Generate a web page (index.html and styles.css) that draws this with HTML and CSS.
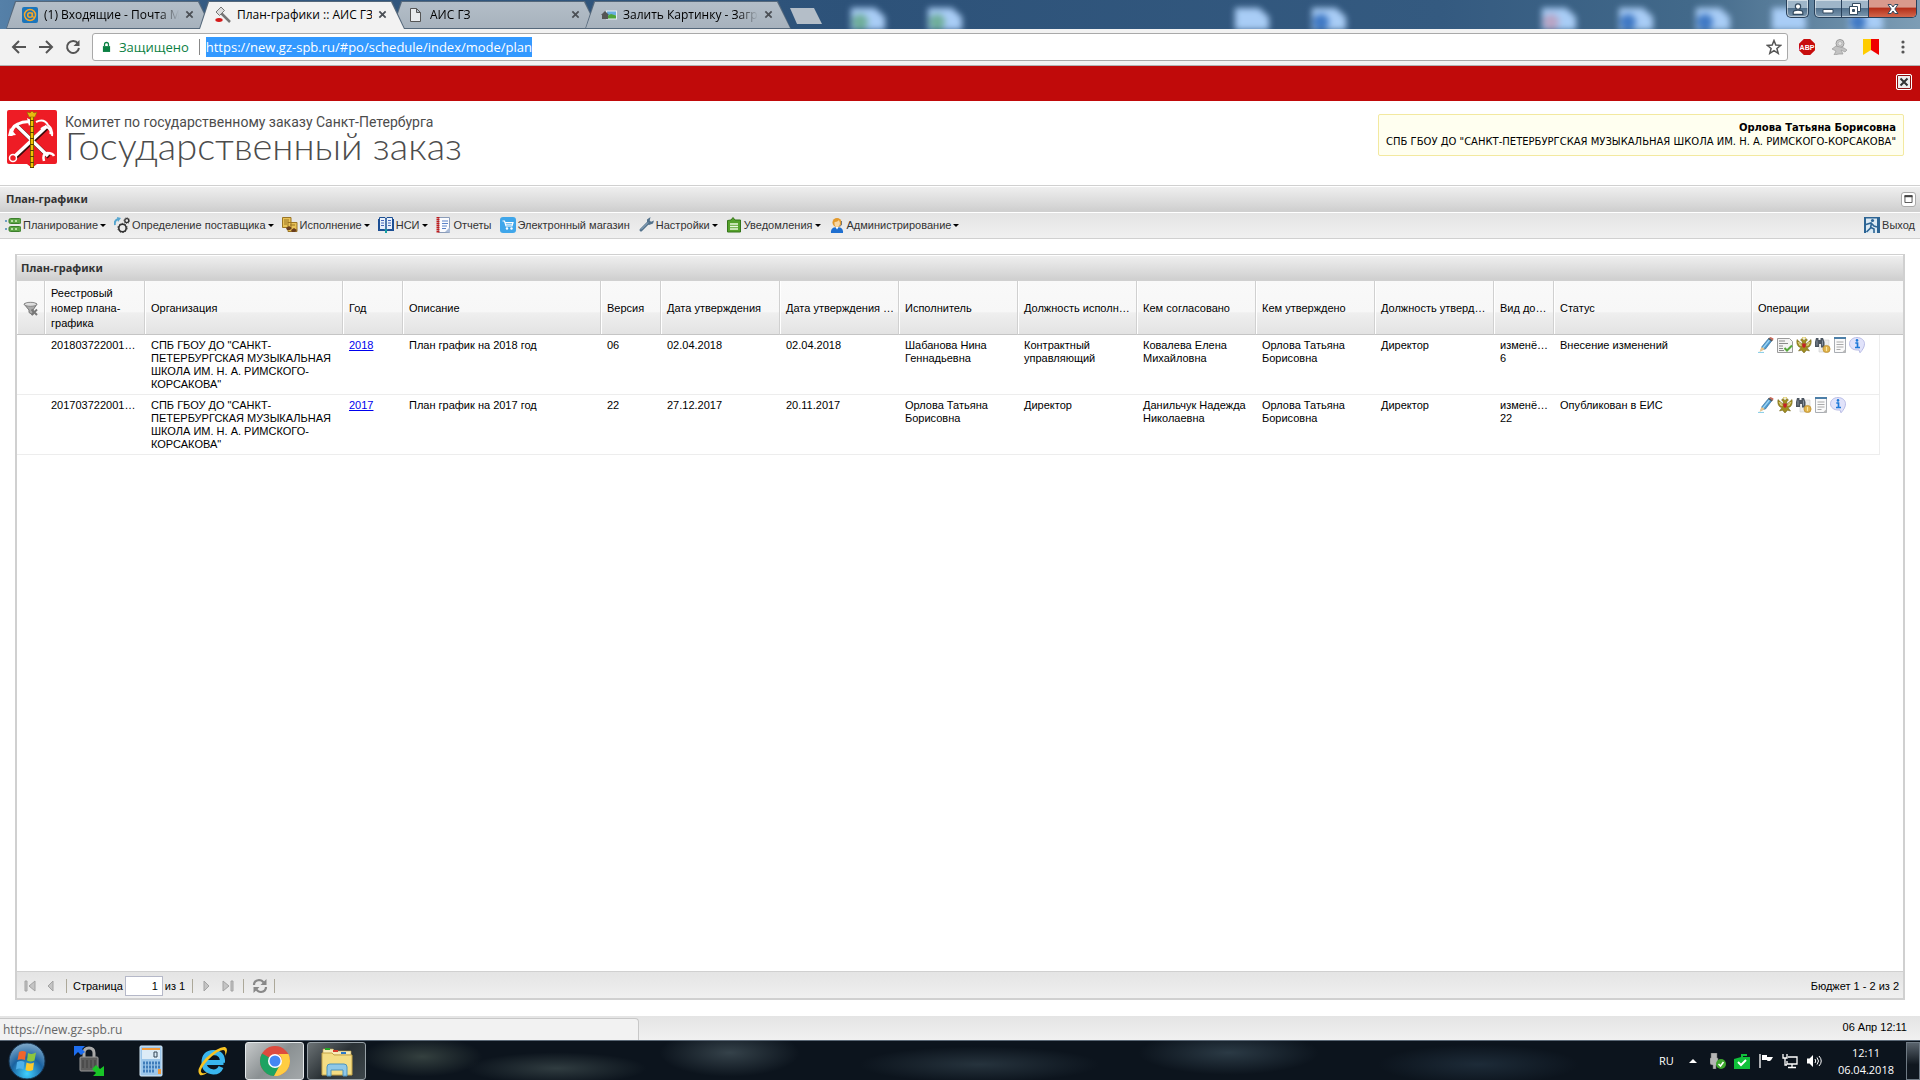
FILE: index.html
```html
<!DOCTYPE html>
<html lang="ru">
<head>
  <meta charset="UTF-8">
  <meta name="viewport" content="width=device-width, initial-scale=1.0">
  <title>План-графики :: АИС ГЗ</title>
  <link rel="stylesheet" href="styles.css">
</head>
<body>
  <svg class="sprite" aria-hidden="true">
    <symbol id="i-pencil" viewBox="0 0 16 16">
      <path d="M0 15.500h6" stroke="#8fd0e8" stroke-width="1.200"/>
      <path d="M3 13l1-3.500 6.500-8 3.500 2-6.500 8.500z" fill="#4f9bd0" stroke="#2e6590" stroke-width=".6"/>
      <path d="M5 11l6.500-8" stroke="#9ed4f2" stroke-width="1.200"/>
      <path d="M1.500 15l2-5 3.500 2z" fill="#e8c48c"/>
      <path d="M11 1l1.500-1 3 1.500-.5 2z" fill="#c96a5c"/>
      <path d="M10 2l1-1.200 3.800 2.400-1 1.200z" fill="#555"/>
    </symbol>
    <symbol id="i-check" viewBox="0 0 16 16">
      <path d="M.500 1.500h12l3 3v11H.500z" fill="#f4f4f4" stroke="#9b9b9b"/>
      <path d="M2 4h6M2 6.500h9M2 9h4M2 11.500h4M2 13.500h5" stroke="#8a8a8a" stroke-width="1.200"/>
      <path d="M7.500 11l2.500 2.500 5-5" fill="none" stroke="#57a83c" stroke-width="2"/>
    </symbol>
    <symbol id="i-eagle" viewBox="0 0 16 16">
      <path d="M8 3.500L6 1.500 4.500 3 6 4.500 6.500 7C5 7 3.500 4.500 1 2.500c-.6 3 0 6 2 7.500l2 .5-2.500 3.500 3-.8L8 16l2.500-2.800 3 .8-2.500-3.500 2-.5c2-1.500 2.600-4.500 2-7.500-2.500 2-4 4.500-5.500 4.500L10 4.500 11.500 3 10 1.500z" fill="#a08e20" stroke="#6b5c1a" stroke-width=".5"/>
      <path d="M2 5l2.500 4M3.500 5.500l2 3M14 5l-2.500 4M12.500 5.500l-2 3" stroke="#f3ecb0" stroke-width=".8"/>
      <path d="M6.300 0h1.200v1.500H6.300zM8.500 0h1.200v1.500H8.500z" fill="#d8bf3a"/>
      <path d="M6.300 6.500h3.400v3L8 11 6.300 9.500z" fill="#c5202a"/>
    </symbol>
    <symbol id="i-binoc" viewBox="0 0 16 16">
      <path d="M4 3h10v12H4z" fill="#ececec" stroke="#ccc" stroke-width=".6"/>
      <path d="M1 1h2.500v2h2V1H8l1.500 4v5.500H6V7H4v3H0V5z" fill="#4b545f"/>
      <path d="M2 3.500v5M7.500 3.500v5" stroke="#8792a0"/>
      <circle cx="11.500" cy="12" r="3.600" fill="#dfb24a" stroke="#b98a2a" stroke-width=".7"/>
      <path d="M11.500 10v4" stroke="#fbe6a2" stroke-width="1.200"/>
    </symbol>
    <symbol id="i-doc" viewBox="0 0 12 16">
      <path d="M.500 1h11v14.500H.500z" fill="#fafafa" stroke="#a9adb3"/>
      <path d="M0 1h12" stroke="#4c7fa8" stroke-width="2"/>
      <path d="M2.500 5h7M2.500 7.500h7M2.500 10h7M2.500 12.500h4" stroke="#aaa"/>
      <path d="M8 15.500l3.500-3.500v3.500z" fill="#bbb"/>
    </symbol>
    <symbol id="i-info" viewBox="0 0 16 16">
      <path d="M8 .500c4.300 0 7.500 2.800 7.500 6.200 0 3-1.500 5.700-4.500 9.100L10 13H8C4 13 .500 10.500.500 6.700.500 3.300 3.700.500 8 .500z" fill="#e1e3fa" stroke="#babde6"/>
      <circle cx="8" cy="3.400" r="1.300" fill="#1c78d8"/>
      <path d="M6.300 6h2.200v4M6 10.500h5" fill="none" stroke="#1c78d8" stroke-width="1.700"/>
    </symbol>
    <symbol id="i-plan" viewBox="0 0 16 16">
      <path d="M0 4h2M0 12h2" stroke="#4a88b8" stroke-width="1.500"/>
      <rect x="4" y="1.500" width="12" height="5" rx="1.500" fill="#5ca545" stroke="#3c7f2c"/>
      <rect x="4" y="9.500" width="12" height="5" rx="1.500" fill="#5ca545" stroke="#3c7f2c"/>
      <path d="M6 4h2M10 4h2M6 12h2M10 12h2" stroke="#d2f0c4" stroke-width="1.500"/>
    </symbol>
    <symbol id="i-gears" viewBox="0 0 16 16">
      <path d="M1 8c-.8-3 .5-5 3-6" fill="none" stroke="#55a5cf" stroke-width="2"/>
      <path d="M3 0l4 1-3 4z" fill="#55a5cf"/>
      <circle cx="8.500" cy="11" r="3.700" fill="none" stroke="#303030" stroke-width="1.600"/>
      <circle cx="8.500" cy="11" r="4.600" fill="none" stroke="#303030" stroke-width="1" stroke-dasharray="1.500 1.400"/>
      <circle cx="12.800" cy="3.600" r="2" fill="none" stroke="#303030" stroke-width="1.300"/>
      <circle cx="12.800" cy="3.600" r="2.900" fill="none" stroke="#303030" stroke-width=".8" stroke-dasharray="1 1.200"/>
    </symbol>
    <symbol id="i-exec" viewBox="0 0 16 16">
      <path d="M.500.500H9v10H.500zM6 5.500h9v9H6z" fill="#e8c257" stroke="#9b7524"/>
      <path d="M2 3h5M2 5h5M2 7h3M8 8h5" stroke="#9b7524"/>
      <path d="M4 11l3-2 3 2-2 2H5zM9 13l3-2 3 2-2 2h-3z" fill="#6b3f1f"/>
    </symbol>
    <symbol id="i-book" viewBox="0 0 16 16">
      <path d="M0 2h16v12H0z" fill="#1c4f94"/>
      <path d="M1.500.500H7l1 1 1-1h5.500v12H9.500L8 13.800 6.500 12.500h-5z" fill="#e9f1fb" stroke="#1c4f94"/>
      <path d="M8 1v12.500" stroke="#1c4f94" stroke-width="1.500"/>
      <path d="M3 3.500h3M3 6h3M3 8.500h3M10 3.500h3M10 6h3M10 8.500h3" stroke="#4a68b8" stroke-width="1.200"/>
      <path d="M8 12v4" stroke="#16a0a0" stroke-width="2"/>
    </symbol>
    <symbol id="i-report" viewBox="0 0 16 16">
      <path d="M2.500.500h11v15h-11z" fill="#fbfcff" stroke="#8b9cb8"/>
      <path d="M2 0v16" stroke="#c01c1c" stroke-width="3" stroke-dasharray="1.500 .500"/>
      <path d="M6 4h6M6 6.500h6M6 9h5M6 11.500h4" stroke="#5b83c8"/>
      <path d="M9 15l5-5v5.500z" fill="#aabbd8"/>
    </symbol>
    <symbol id="i-shop" viewBox="0 0 16 16">
      <rect width="16" height="16" rx="3" fill="#3fa6ea"/>
      <path d="M2.500 4h2l1.500 5h6l1-3.500H5.500" fill="none" stroke="#fff" stroke-width="1.200"/>
      <path d="M6 7.200h6.500" stroke="#fff"/>
      <circle cx="7" cy="11.500" r="1.200" fill="#fff"/><circle cx="11.500" cy="11.500" r="1.200" fill="#fff"/>
    </symbol>
    <symbol id="i-wrench" viewBox="0 0 16 16">
      <path d="M3 13l7-7" stroke="#53728c" stroke-width="3" stroke-linecap="round"/>
      <path d="M12.500 0L9 2.500v4l2 1.500 4-1.500 1-3-3 1.200-1.300-1.200z" fill="#53728c"/>
      <path d="M3 12.500L10 5.500" stroke="#9fb8cc"/>
    </symbol>
    <symbol id="i-note" viewBox="0 0 16 16">
      <path d="M1.500 3.500L5 3l2-2.500L9 3h5.500v12h-13z" fill="#55a12a" stroke="#35751a"/>
      <path d="M4 7h8M4 9.500h8M4 12h8" stroke="#eaf8dc" stroke-width="1.300"/>
    </symbol>
    <symbol id="i-admin" viewBox="0 0 16 16">
      <path d="M2 16c-.500-4 2-6 6-6s6.500 2 6 6z" fill="#1f6fd0"/>
      <path d="M6 9.500l2 3 2-3z" fill="#fff"/>
      <circle cx="8" cy="5.500" r="4.500" fill="#e39a2d"/>
      <path d="M5.500 5c3 0 4-1.500 4.500-2l1 3c0 2-1.300 4-3 4S5 8 5.500 5z" fill="#f8d7a4"/>
      <path d="M12.500 4v4l-2 1.500" fill="none" stroke="#777"/>
    </symbol>
    <symbol id="i-exit" viewBox="0 0 16 16">
      <path d="M0 0h16v16H0z" fill="#2c6494"/>
      <path d="M2 1.500h11V16H2z" fill="#dceaf4"/>
      <circle cx="8.500" cy="3.500" r="1.600" fill="#2c6494"/>
      <path d="M2 7.500L7 6l3 3 3 1M7.500 6l-1 5L2.500 15M7 10.500l3 1.500v4" fill="none" stroke="#2c6494" stroke-width="1.600"/>
    </symbol>
    <symbol id="i-x" viewBox="0 0 10 10"><path d="M1.500 1.500l7 7M8.500 1.500l-7 7" stroke="currentColor" stroke-width="2"/></symbol>
    <symbol id="i-desktop" viewBox="0 0 44 22">
      <path d="M6 0h24l10 9v13H6z" fill="#a9cdf6"/>
      <circle cx="15" cy="14" r="8" fill="currentColor"/>
    </symbol>
  </svg>

  <!-- Окно браузера -->
  <div class="tabstrip">
    <div class="desktop-blur" aria-hidden="true">
      <svg class="d1"><use href="#i-desktop"/></svg>
      <svg class="d2"><use href="#i-desktop"/></svg>
      <svg class="d3"><use href="#i-desktop"/></svg>
      <svg class="d4"><use href="#i-desktop"/></svg>
      <svg class="d5"><use href="#i-desktop"/></svg>
      <svg class="d6"><use href="#i-desktop"/></svg>
      <svg class="d7"><use href="#i-desktop"/></svg>
      <svg class="d8"><use href="#i-desktop"/></svg>
      <svg class="d9"><use href="#i-desktop"/></svg>
    </div>
    <div class="tab">
      <svg class="icon" viewBox="0 0 16 16"><rect width="16" height="16" rx="2" fill="#1b75bb"/><circle cx="8" cy="8" r="5.500" fill="none" stroke="#f4a62a" stroke-width="1.500"/><circle cx="8" cy="8" r="2.300" fill="none" stroke="#f4a62a" stroke-width="1.500"/><path d="M10.500 5.500V9q0 1.500 2 1" fill="none" stroke="#f4a62a" stroke-width="1.300"/></svg>
      <span class="tab-title">(1) Входящие - Почта M</span>
      <button class="tab-close" aria-label="Закрыть вкладку"><svg><use href="#i-x"/></svg></button>
    </div>
    <div class="tab active">
      <svg class="icon" viewBox="0 0 16 16"><path d="M5.500 5.500L15 15" stroke="#777" stroke-width="2.500"/><path d="M1 5l5-5 3.500 3.500-5 5z" fill="#ddd" stroke="#777"/><path d="M.500 12q3.500-2 7 0v2q-3.500 2-7 0z" fill="#d41a1a"/></svg>
      <span class="tab-title">План-графики :: АИС ГЗ</span>
      <button class="tab-close" aria-label="Закрыть вкладку"><svg><use href="#i-x"/></svg></button>
    </div>
    <div class="tab">
      <svg class="icon" viewBox="0 0 16 16"><path d="M2.500 1.500h6l4 4v9h-10zM8.500 1.500v4h4" fill="#e8ebee" stroke="#555"/></svg>
      <span class="tab-title">АИС ГЗ</span>
      <button class="tab-close" aria-label="Закрыть вкладку"><svg><use href="#i-x"/></svg></button>
    </div>
    <div class="tab">
      <svg class="icon" viewBox="0 0 16 16"><path d="M5 3.500h11v9H5z" fill="#e6eef5"/><path d="M6 4.500h9v4H6z" fill="#69aee0"/><path d="M6 9l4-2 5 1.500v3H6z" fill="#4ea53a"/><path d="M0 8l4-4 4 4H7v4H1V8z" fill="#555"/></svg>
      <span class="tab-title">Залить Картинку - Загру</span>
      <button class="tab-close" aria-label="Закрыть вкладку"><svg><use href="#i-x"/></svg></button>
    </div>
    <button class="new-tab" aria-label="Новая вкладка"></button>
    <div class="window-buttons">
      <button class="win-user" aria-label="Профиль"><svg viewBox="0 0 10 10"><circle cx="5" cy="3" r="2.200"/><path d="M1 9.500V8q0-2 4-2t4 2v1.500z"/></svg></button>
      <div class="win-group">
        <button aria-label="Свернуть"><svg viewBox="0 0 12 12"><path d="M1 6.500h10v3.500H1z"/></svg></button>
        <button aria-label="Восстановить"><svg viewBox="0 0 12 12"><path d="M3.500.500h8v8h-8z"/><path d="M.500 3.500h8v8h-8z"/><path d="M3.500 6.500h2v2h-2z" fill="#456"/></svg></button>
        <button class="win-close" aria-label="Закрыть"><svg viewBox="0 0 12 12"><path d="M1 1.500h3.200L6 4l1.800-2.500H11L7.800 6 11 10.500H7.800L6 8l-1.800 2.500H1L4.200 6z"/></svg></button>
      </div>
    </div>
  </div>

  <div class="addressbar">
    <button class="nav-btn" aria-label="Назад"><svg viewBox="0 0 16 16"><path d="M15 8H2M8 2L2 8l6 6"/></svg></button>
    <button class="nav-btn" aria-label="Вперёд"><svg viewBox="0 0 16 16"><path d="M1 8h13M8 2l6 6-6 6"/></svg></button>
    <button class="nav-btn" aria-label="Обновить"><svg viewBox="0 0 16 16"><path d="M13 4.500A6 6 0 1 0 14 9"/><path d="M14.500 1v6h-6z" fill="#555" stroke="none"/></svg></button>
    <div class="omnibox">
      <svg class="lock" viewBox="0 0 10 12"><path d="M1 5h8v6.500H1z" fill="#0b8043"/><path d="M2.800 5V3.200a2.200 2.200 0 0 1 4.400 0V5" fill="none" stroke="#0b8043" stroke-width="1.400"/></svg>
      <span class="secure">Защищено</span>
      <span class="url">https://new.gz-spb.ru/#po/schedule/index/mode/plan</span>
      <button class="star" aria-label="В закладки"><svg viewBox="0 0 16 16"><path d="M8 1.500l1.800 4.600 4.900.300-3.800 3.100 1.300 4.800L8 11.600l-4.200 2.700 1.300-4.800L1.300 6.400l4.900-.300z"/></svg></button>
    </div>
    <div class="extensions">
      <button class="abp" aria-label="Adblock Plus">ABP</button>
      <button aria-label="Расширение"><svg viewBox="0 0 16 16"><circle cx="9" cy="4.500" r="4" fill="#ccc" stroke="#999"/><circle cx="9" cy="4.500" r="2" fill="#e4e4e4" stroke="#aaa" stroke-width=".7"/><path d="M1 10l4-3 8 2 3 2-2 2-4-2 2 4H8l-5 1 2-4z" fill="#c2c2c2" stroke="#999" stroke-width=".7"/></svg></button>
      <button aria-label="Закладки"><svg viewBox="0 0 16 16"><path d="M0 0h8v11l-8 5z" fill="#fc0"/><path d="M8 0h8v16l-8-5z" fill="#f00000"/></svg></button>
      <button aria-label="Меню"><svg viewBox="0 0 16 16" fill="#555"><circle cx="8" cy="3" r="1.600"/><circle cx="8" cy="8" r="1.600"/><circle cx="8" cy="13" r="1.600"/></svg></button>
    </div>
  </div>

  <!-- Страница -->
  <div class="alert">
    <button class="alert-close" aria-label="Закрыть"><svg><use href="#i-x"/></svg></button>
  </div>

  <header class="header">
    <a class="logo" href="#">
      <svg class="crest" viewBox="0 0 50 58">
        <path d="M2 0h46q2 0 2 2v50q0 2-2 2H30l-5 4-5-4H2q-2 0-2-2V2q0-2 2-2z" fill="#ee1c25"/>
        <g fill="none" stroke="#3b0a0a" stroke-width="4" transform="translate(1 1)"><path d="M8 46L40 16M41 46L9 15"/></g>
        <g fill="none" stroke="#fff">
          <path d="M8 46L40 16M41 46L9 15" stroke-width="3.500"/>
          <path d="M4 26Q4 17 11 14q6-3 12-2" stroke-width="3"/>
          <path d="M29 12q8-4 12 3 5 4 4 11M34 19q5-4 7-1 4 3 2 6" stroke-width="2"/>
          <circle cx="6" cy="48" r="3.500" stroke-width="1.500"/>
          <path d="M37 51q-2-7 3-8 6 0 7 3" stroke-width="2.500"/>
        </g>
        <path d="M1 26l2-8 6 7zM20 8l6 3-4 5z" fill="#fff"/>
        <path d="M25 5v53" stroke="#5c4300" stroke-width="4"/>
        <path d="M25 5v52" stroke="#f0c400" stroke-width="2.500" stroke-dasharray="5 1"/>
        <path d="M20 2l3 1 2-2 2 2 3-1-2 5h-6z" fill="#e8ba10" stroke="#8d6a00" stroke-width=".6"/>
      </svg>
      <span class="logo-text">
        <span class="logo-small">Комитет по государственному заказу Санкт-Петербурга</span>
        <span class="logo-big">Государственный заказ</span>
      </span>
    </a>
    <div class="user-box">
      <strong>Орлова Татьяна Борисовна</strong>
      <span>СПБ ГБОУ ДО "САНКТ-ПЕТЕРБУРГСКАЯ МУЗЫКАЛЬНАЯ ШКОЛА ИМ. Н. А. РИМСКОГО-КОРСАКОВА"</span>
    </div>
  </header>

  <div class="panel-title page-title">
    <h1>План-графики</h1>
    <button class="tool" aria-label="Развернуть"><svg viewBox="0 0 9 9"><path d="M.500.500h8v8h-8z" fill="none" stroke="#444"/><path d="M0 1.500h9" stroke="#444" stroke-width="2"/></svg></button>
  </div>

  <nav class="menu">
    <button class="has-menu"><svg class="icon"><use href="#i-plan"/></svg>Планирование</button>
    <button class="has-menu"><svg class="icon"><use href="#i-gears"/></svg>Определение поставщика</button>
    <button class="has-menu"><svg class="icon"><use href="#i-exec"/></svg>Исполнение</button>
    <button class="has-menu"><svg class="icon"><use href="#i-book"/></svg>НСИ</button>
    <button><svg class="icon"><use href="#i-report"/></svg>Отчеты</button>
    <button><svg class="icon"><use href="#i-shop"/></svg>Электронный магазин</button>
    <button class="has-menu"><svg class="icon"><use href="#i-wrench"/></svg>Настройки</button>
    <button class="has-menu"><svg class="icon"><use href="#i-note"/></svg>Уведомления</button>
    <button class="has-menu"><svg class="icon"><use href="#i-admin"/></svg>Администрирование</button>
    <button class="exit"><svg class="icon"><use href="#i-exit"/></svg>Выход</button>
  </nav>

  <main class="content">
    <section class="grid">
      <div class="panel-title"><h2>План-графики</h2></div>
      <div class="grid-body">
        <table>
          <colgroup>
            <col class="w-filter"><col class="w-num"><col><col class="w-short"><col><col class="w-short">
            <col class="w-mid"><col class="w-mid"><col class="w-mid"><col class="w-mid"><col class="w-mid"><col class="w-mid"><col class="w-mid">
            <col class="w-short"><col><col class="w-ops"><col class="w-scroll">
          </colgroup>
          <thead>
            <tr>
              <th class="filter"><svg class="icon" viewBox="0 0 16 16"><path d="M1 3q6.500-2.500 13 0L10 9v5l-4-2.500V9z" fill="#aaa" stroke="#777"/><ellipse cx="7.500" cy="3.300" rx="6.300" ry="2" fill="#ddd" stroke="#777" stroke-width=".8"/><path d="M8.500 8.500l5.500 5.500M14 8.500L8.500 14" stroke="#777" stroke-width="2"/></svg></th>
              <th class="wrap">Реестровый номер плана-графика</th>
              <th>Организация</th>
              <th>Год</th>
              <th>Описание</th>
              <th>Версия</th>
              <th>Дата утверждения</th>
              <th>Дата утверждения …</th>
              <th>Исполнитель</th>
              <th>Должность исполн…</th>
              <th>Кем согласовано</th>
              <th>Кем утверждено</th>
              <th>Должность утверд…</th>
              <th>Вид до…</th>
              <th>Статус</th>
              <th class="last" colspan="2">Операции</th>
            </tr>
          </thead>
          <tbody>
            <tr>
              <td></td>
              <td>201803722001…</td>
              <td>СПБ ГБОУ ДО "САНКТ-ПЕТЕРБУРГСКАЯ МУЗЫКАЛЬНАЯ ШКОЛА ИМ. Н. А. РИМСКОГО-КОРСАКОВА"</td>
              <td><a href="#">2018</a></td>
              <td>План график на 2018 год</td>
              <td>06</td>
              <td>02.04.2018</td>
              <td>02.04.2018</td>
              <td>Шабанова Нина Геннадьевна</td>
              <td>Контрактный управляющий</td>
              <td>Ковалева Елена Михайловна</td>
              <td>Орлова Татьяна Борисовна</td>
              <td>Директор</td>
              <td>изменё… 6</td>
              <td>Внесение изменений</td>
              <td class="ops">
                <div class="ops-list">
                  <button aria-label="Редактировать"><svg class="icon"><use href="#i-pencil"/></svg></button>
                  <button aria-label="Проверить"><svg class="icon"><use href="#i-check"/></svg></button>
                  <button aria-label="ЕИС"><svg class="icon"><use href="#i-eagle"/></svg></button>
                  <button aria-label="Просмотр"><svg class="icon"><use href="#i-binoc"/></svg></button>
                  <button aria-label="Документ"><svg class="icon narrow"><use href="#i-doc"/></svg></button>
                  <button aria-label="Информация"><svg class="icon"><use href="#i-info"/></svg></button>
                </div>
              </td>
              <td class="scroll"></td>
            </tr>
            <tr>
              <td></td>
              <td>201703722001…</td>
              <td>СПБ ГБОУ ДО "САНКТ-ПЕТЕРБУРГСКАЯ МУЗЫКАЛЬНАЯ ШКОЛА ИМ. Н. А. РИМСКОГО-КОРСАКОВА"</td>
              <td><a href="#">2017</a></td>
              <td>План график на 2017 год</td>
              <td>22</td>
              <td>27.12.2017</td>
              <td>20.11.2017</td>
              <td>Орлова Татьяна Борисовна</td>
              <td>Директор</td>
              <td>Данильчук Надежда Николаевна</td>
              <td>Орлова Татьяна Борисовна</td>
              <td>Директор</td>
              <td>изменё… 22</td>
              <td>Опубликован в ЕИС</td>
              <td class="ops">
                <div class="ops-list">
                  <button aria-label="Редактировать"><svg class="icon"><use href="#i-pencil"/></svg></button>
                  <button aria-label="ЕИС"><svg class="icon"><use href="#i-eagle"/></svg></button>
                  <button aria-label="Просмотр"><svg class="icon"><use href="#i-binoc"/></svg></button>
                  <button aria-label="Документ"><svg class="icon narrow"><use href="#i-doc"/></svg></button>
                  <button aria-label="Информация"><svg class="icon"><use href="#i-info"/></svg></button>
                </div>
              </td>
              <td class="scroll"></td>
            </tr>
          </tbody>
        </table>
      </div>
      <div class="pager">
        <button aria-label="Первая страница"><svg viewBox="0 0 12 12"><path d="M1 1h2v10H1zM11 1v10L5 6z"/></svg></button>
        <button aria-label="Предыдущая страница"><svg viewBox="0 0 12 12"><path d="M8 1v10L3 6z"/></svg></button>
        <span class="sep"></span>
        <label for="page">Страница</label>
        <input id="page" type="text" value="1">
        <span>из 1</span>
        <span class="sep wide"></span>
        <button aria-label="Следующая страница"><svg viewBox="0 0 12 12"><path d="M3 1v10l5-5z"/></svg></button>
        <button aria-label="Последняя страница"><svg viewBox="0 0 12 12"><path d="M9 1h2v10H9zM1 1v10l6-5z"/></svg></button>
        <span class="sep wide"></span>
        <button class="refresh" aria-label="Обновить"><svg viewBox="0 0 16 16"><path d="M2 7q0-4.500 5-5 3 0 4.500 2.500M14 9q0 4.500-5 5-3 0-4.500-2.500" fill="none" stroke="#888" stroke-width="2.200"/><path d="M14.500 1v6H8.500zM1.500 15V9h6z" fill="#888"/></svg></button>
        <span class="sep"></span>
        <span class="total">Бюджет 1 - 2 из 2</span>
      </div>
    </section>
  </main>

  <footer class="footer">
    <span>06 Апр 12:11</span>
    <div class="link-status">https://new.gz-spb.ru</div>
  </footer>

  <!-- Панель задач -->
  <div class="taskbar">
    <button class="start" aria-label="Пуск">
      <svg viewBox="0 0 38 38">
        <defs><radialGradient id="orb" cx=".5" cy=".85" r=".9"><stop offset="0" stop-color="#3fd0ff"/><stop offset=".5" stop-color="#1b62a0"/><stop offset="1" stop-color="#8eb4cf"/></radialGradient></defs>
        <circle cx="19" cy="19" r="18" fill="url(#orb)" stroke="#16334e"/>
        <path d="M11 10q4-2 7 0l-1 8q-4-1.500-7.500 0z" fill="#f0652b"/>
        <path d="M20 11q4 2 8-.500l-1.500 8q-4 2-7.500 0z" fill="#8cc63e"/>
        <path d="M9 20q4-2 7.500 0l-1 7.500q-4-2-7.500 0z" fill="#4fb0ea"/>
        <path d="M18.500 20.500q4 2 7.500 0l-1 7.500q-4 2-7.500 0z" fill="#fcc92c"/>
      </svg>
    </button>
    <button class="task" aria-label="VPN">
      <svg viewBox="0 0 32 32"><path d="M11 14V8q0-5 5-5t5 5v6" fill="none" stroke="#aaa" stroke-width="3"/><rect x="7" y="12" width="18" height="14" rx="1" fill="#5c5c5c" stroke="#999"/><path d="M10 15v8M14 15v8M18 15v8M22 15v8" stroke="#3d3d3d"/><path d="M1 1h11l-3 3 3 3-4 3-3-3-4 4z" fill="#1e6ef0"/><path d="M31 31H20l3-3-4-4 4-4 4 4 4-3z" fill="#19c427"/></svg>
    </button>
    <button class="task" aria-label="Калькулятор">
      <svg viewBox="0 0 32 32"><rect x="5" y="1" width="22" height="30" rx="1" fill="#9cc6ea" stroke="#d9ecfa"/><path d="M7 3h18v2H7z" fill="#f39a3a"/><path d="M7 5h18v9H7z" fill="#dcebf7"/><path d="M19 7h3v5h-3z" fill="none" stroke="#345"/><path d="M8 18h17M8 22h17M8 26h12" stroke="#3f7cba" stroke-width="3" stroke-dasharray="2 1"/><path d="M23 24h3v5h-3z" fill="#f39a3a"/></svg>
    </button>
    <button class="task" aria-label="Internet Explorer">
      <svg viewBox="0 0 32 32"><path d="M6 17.500h20.500M24 22q-2 5-7.500 5Q7 26 7 17.500 7 8 16.500 7.500 26 8 25.500 17.500" fill="none" stroke="#39b6ee" stroke-width="5"/><path d="M3 30Q-2 25 9 13 22 1 28 2q4 2 0 9 1-6-2-6-5 0-15 10Q1 26 5 28q2 1 6-1-5 4-8 3z" fill="#f7c322"/></svg>
    </button>
    <button class="task running current" aria-label="Google Chrome">
      <svg viewBox="0 0 32 32"><circle cx="16" cy="16" r="15" fill="#dd4b3e"/><path d="M3 8.500A15 15 0 0 0 15 31l7-12z" fill="#1da362"/><path d="M31 16A15 15 0 0 1 15 31l8-15q0-5-4-7h10.500q1.500 3 1.500 7z" fill="#ffcd42"/><circle cx="16" cy="16" r="7" fill="#fff"/><circle cx="16" cy="16" r="5.500" fill="#4587f3"/></svg>
    </button>
    <button class="task running" aria-label="Проводник">
      <svg viewBox="0 0 32 32"><path d="M2 4h10l2 2h16v4H2z" fill="#f7ecb8" stroke="#b99c4c" stroke-width=".6"/><path d="M4 3h5v2H4z" fill="#28a428"/><path d="M12 5h5v2h-5z" fill="#d53c2c"/><path d="M20 7h5v2h-5z" fill="#2a78c8"/><path d="M1 8h10l2 2h18v20H1z" fill="#f4dd84" stroke="#c6a548"/><path d="M6 31V22q0-3 3-3h14q3 0 3 3v9h-4v-6H10v6z" fill="#8fc8e8" stroke="#4d94bd"/></svg>
    </button>
    <div class="tray">
      <span class="lang">RU</span>
      <svg class="up" viewBox="0 0 8 4"><path d="M4 0l4 4H0z" fill="#fff"/></svg>
      <svg viewBox="0 0 16 16"><path d="M1 0h6v5h1v5q0 2-2 2v4H3v-4q-3 0-3-2V5h1z" fill="#b5b5b5" stroke="#666" stroke-width=".5"/><circle cx="11" cy="11" r="5" fill="#3da72c"/><path d="M8.500 11l2 2 3-4" fill="none" stroke="#fff" stroke-width="1.500"/></svg>
      <svg viewBox="0 0 16 16"><path d="M0 6l7-2V1h6v2H9v1h7v12H0z" fill="#10c03a"/><path d="M4 9l3 3 5-5" fill="none" stroke="#fff" stroke-width="2"/></svg>
      <svg viewBox="0 0 16 16"><path d="M2 1v14" stroke="#fff" stroke-width="1.300"/><path d="M4 2h5v2h6l-1.500 2.500L12 8H9.500L9 7H4z" fill="#fff"/></svg>
      <svg viewBox="0 0 16 16" fill="none" stroke="#fff" stroke-width="1.300"><path d="M6 4h9v7H5V8M10 11v3M6 14.500h8M1 1v4h4V1M3 5v7h2"/></svg>
      <svg viewBox="0 0 16 16"><path d="M1 5.500h2.500L7 2v12l-3.500-3.500H1z" fill="#fff"/><path d="M9 6q1.500 2 0 4M11 4.500q3 3.500 0 7M13 3q4.500 5 0 10" fill="none" stroke="#fff"/></svg>
      <div class="clock"><span>12:11</span><span>06.04.2018</span></div>
      <button class="show-desktop" aria-label="Свернуть все окна"></button>
    </div>
  </div>
</body>
</html>
```
FILE: styles.css
```css
* {
  box-sizing: border-box;
}
body {
  margin: 0;
  height: 100vh;
  display: flex;
  flex-direction: column;
  overflow: hidden;
  background: #fff;
  color: #000;
  font-family: "Liberation Sans", Arial, sans-serif;
  font-size: 11px;
}
button {
  border: none;
  background: none;
  padding: 0;
  margin: 0;
  color: inherit;
  font: inherit;
  display: flex;
  align-items: center;
  justify-content: center;
  cursor: pointer;
}
h1, h2 {
  margin: 0;
}
.sprite {
  position: absolute;
  width: 0;
  height: 0;
}
.icon {
  width: 16px;
  height: 16px;
  flex: none;
  display: block;
}
.icon.narrow {
  width: 12px;
}

/* Вкладки */
.tabstrip {
  position: relative;
  display: flex;
  flex: none;
  height: 29px;
  padding-left: 6px;
  overflow: hidden;
  background: linear-gradient(90deg, #5580a8 0, #335880 220px, #2d5279 45%, #345a80 75%, #42698a 88%, #7d9db5 100%);
  font-family: "Open Sans", "Noto Sans", sans-serif;
  font-size: 12px;
}
.desktop-blur {
  position: absolute;
  inset: 0;
  filter: blur(3px);
}
.desktop-blur svg {
  position: absolute;
  top: 8px;
  width: 44px;
  height: 22px;
  color: #3f78c4;
}
.desktop-blur .d1 { left: 44%; color: #6fae9a; }
.desktop-blur .d2 { left: 48%; color: #6fae9a; }
.desktop-blur .d3 { left: 64%; color: #a9cdf6; }
.desktop-blur .d4 { left: 68%; }
.desktop-blur .d5 { left: 80%; color: #b8a5c5; }
.desktop-blur .d6 { left: 84%; }
.desktop-blur .d7 { left: 88%; }
.desktop-blur .d8 { left: 92%; color: #a9cdf6; }
.desktop-blur .d9 { left: 96%; }
.tab {
  position: relative;
  z-index: 1;
  display: flex;
  align-items: center;
  gap: 6px;
  width: 206px;
  height: 28px;
  margin: 1px -13px 0 0;
  padding: 0 18px 1px 16px;
  background: #55687b;
  clip-path: polygon(9px 0, 193px 0, 100% 100%, 0 100%);
}
.tab::before {
  content: "";
  position: absolute;
  inset: 1px 0 1px;
  z-index: -1;
  background: linear-gradient(#b4bec8, #a7b2bd);
  clip-path: polygon(10px 0, 192px 0, 205px 100%, 1px 100%);
}
.tab.active {
  z-index: 2;
}
.tab.active::before {
  inset: 1px 0 0;
  background: #f2f2f2;
}
.tab-title {
  flex: 1;
  overflow: hidden;
  white-space: nowrap;
  mask-image: linear-gradient(90deg, #000 85%, transparent);
}
.tab.active .tab-title {
  mask-image: none;
}
.tab-close {
  width: 9px;
  height: 16px;
  color: #4c5056;
}
.tab-close svg {
  width: 9px;
  height: 9px;
}
.new-tab {
  position: relative;
  width: 32px;
  height: 16px;
  margin: 8px 0 0 12px;
  background: #b4bec8;
  clip-path: polygon(0 0, 24px 0, 100% 100%, 7px 100%);
}
.window-buttons {
  position: relative;
  display: flex;
  gap: 5px;
  margin-left: auto;
  padding-right: 3px;
}
.window-buttons svg {
  width: 12px;
  height: 12px;
  fill: #fff;
  stroke: #344b60;
}
.win-user, .win-group {
  height: 18px;
  border: 1px solid #28405a;
  border-top: none;
  border-radius: 0 0 5px 5px;
  box-shadow: inset 0 0 0 1px rgba(255, 255, 255, 0.5);
  background: linear-gradient(#9fb6c9 45%, #51708c 50%, #7c98b0);
}
.win-user {
  width: 23px;
}
.win-group {
  display: flex;
  overflow: hidden;
}
.win-group button {
  width: 27px;
  border-right: 1px solid #28405a;
}
.win-group .win-close {
  width: 47px;
  border-right: none;
  background: linear-gradient(#d99a8c 40%, #b5301a 50%, #d2674c);
}

/* Адресная строка */
.addressbar {
  display: flex;
  flex: none;
  align-items: center;
  height: 37px;
  padding: 0 9px 0 11px;
  gap: 11px;
  background: #f2f2f2;
  border-bottom: 1px solid #b3b3b3;
  font-family: "Open Sans", "Noto Sans", sans-serif;
  font-size: 13px;
}
.nav-btn svg {
  width: 16px;
  height: 16px;
  fill: none;
  stroke: #555;
  stroke-width: 2;
}
.omnibox {
  display: flex;
  flex: 1;
  align-items: center;
  height: 28px;
  padding: 0 5px 0 9px;
  background: #fff;
  border: 1px solid #a9a9a9;
  border-radius: 3px;
}
.lock {
  width: 9px;
  height: 12px;
}
.secure {
  margin-left: 8px;
  padding-right: 10px;
  border-right: 1px solid #888;
  line-height: 16px;
  color: #0b8043;
}
.url {
  margin-left: 6px;
  line-height: 20px;
  color: #fff;
  background: #3399ff;
}
.star {
  margin-left: auto;
}
.star svg {
  width: 16px;
  height: 16px;
  fill: none;
  stroke: #555;
  stroke-width: 1.5;
}
.extensions {
  display: flex;
  gap: 16px;
}
.extensions svg, .abp {
  width: 16px;
  height: 16px;
}
.abp {
  background: #c70d0d;
  color: #fff;
  font-family: "Liberation Sans", Arial, sans-serif;
  font-size: 7px;
  font-weight: bold;
  clip-path: polygon(30% 0, 70% 0, 100% 30%, 100% 70%, 70% 100%, 30% 100%, 0 70%, 0 30%);
}

/* Красная полоса */
.alert {
  display: flex;
  flex: none;
  align-items: center;
  justify-content: flex-end;
  height: 35px;
  padding: 0 8px 4px 0;
  background: #c00a0a;
}
.alert-close {
  width: 16px;
  height: 16px;
  background: #eee;
  border: 1px solid #fff;
  border-radius: 2px;
  box-shadow: inset 0 0 0 1px #8c1010;
  color: #333;
}
.alert-close svg {
  width: 10px;
  height: 10px;
}

/* Шапка */
.header {
  display: flex;
  flex: none;
  align-items: flex-start;
  justify-content: space-between;
  height: 84px;
  padding: 8px 16px 0 7px;
}
.logo {
  display: flex;
  gap: 8px;
  color: #4c4c4c;
  text-decoration: none;
}
.crest {
  width: 50px;
  height: 60px;
}
.logo-text {
  display: flex;
  flex-direction: column;
  padding-top: 4px;
}
.logo-small {
  font-family: Roboto, sans-serif;
  font-size: 14px;
  line-height: 18px;
}
.logo-big {
  font-family: Lato, sans-serif;
  font-weight: 300;
  font-size: 38px;
  line-height: 28px;
}
.user-box {
  display: flex;
  flex-direction: column;
  align-items: flex-end;
  margin-top: 5px;
  padding: 6px 7px;
  height: 42px;
  background: #fffff0;
  border: 1px solid #f3e9a0;
  border-radius: 2px;
  font-family: "DejaVu Sans", Verdana, sans-serif;
  font-size: 10px;
  line-height: 14px;
}

/* Панели */
.panel-title {
  display: flex;
  flex: none;
  align-items: center;
  justify-content: space-between;
  height: 27px;
  padding: 2px 4px 0;
  background: linear-gradient(#f0f0f0, #d7d7d7 80%, #d0d0d0);
  border-top: 1px solid #d0d0d0;
  border-bottom: 2px solid #d0d0d0;
  box-shadow: inset 0 1px #fff;
}
.panel-title h1, .panel-title h2 {
  color: #333;
  font-family: "Noto Sans", Tahoma, sans-serif;
  font-size: 11px;
  line-height: 16px;
}
.page-title {
  padding: 2px 4px 0 6px;
}
.tool {
  width: 15px;
  height: 15px;
  background: #fff;
  border: 1px solid #aaa;
  border-radius: 3px;
}
.tool svg {
  width: 9px;
  height: 8px;
}
.menu {
  display: flex;
  flex: none;
  height: 27px;
  padding: 0 5px 1px;
  gap: 8px;
  color: #333;
  background: linear-gradient(#e4e4e4, #f0f0f0);
  border-top: 1px solid #fff;
  border-bottom: 1px solid #d0d0d0;
}
.menu button {
  gap: 2px;
  white-space: nowrap;
}
.menu .has-menu::after {
  content: "";
  border: 3px solid transparent;
  border-top-color: #000;
  border-bottom: none;
}
.menu .exit {
  margin-left: auto;
}

/* Таблица */
.content {
  display: flex;
  flex: 1;
  min-height: 0;
  padding: 15px 15px 16px;
}
.grid {
  display: flex;
  flex: 1;
  min-width: 0;
  flex-direction: column;
  border: solid #d0d0d0;
  border-width: 0 2px 2px;
}
.grid-body {
  flex: 1;
  min-height: 0;
}
table {
  width: 100%;
  table-layout: fixed;
  border-collapse: separate;
  border-spacing: 0;
}
.w-filter { width: 28px; }
.w-num { width: 100px; }
.w-short { width: 60px; }
.w-mid { width: 119px; }
.w-ops { width: 128px; }
.w-scroll { width: 23px; }
th {
  height: 54px;
  padding: 2px 0 0 6px;
  text-align: left;
  white-space: nowrap;
  font-weight: normal;
  line-height: 15px;
  background: linear-gradient(#f9f9f9, #f7f7f7 58%, #efefef 60%, #e3e3e3);
  border-right: 1px solid #d0d0d0;
  border-bottom: 1px solid #c5c5c5;
  box-shadow: inset 1px 0 #fff;
}
th.wrap {
  white-space: normal;
}
th.last {
  border-right: none;
}
td {
  height: 60px;
  padding: 4px 6px 3px;
  vertical-align: top;
  line-height: 13px;
  border-bottom: 1px solid #ededed;
}
td a {
  color: #0000ee;
}
td.ops {
  padding: 2px 0 0 6px;
  border-right: 1px solid #ededed;
}
td.scroll {
  border: none;
}
.ops-list {
  display: flex;
  gap: 3px;
}

/* Постраничный вывод */
.pager {
  display: flex;
  flex: none;
  align-items: center;
  height: 27px;
  padding: 1px 4px 0 7px;
  border-top: 1px solid #d0d0d0;
  background: linear-gradient(#e4e4e4, #f0f0f0);
}
.pager svg {
  width: 12px;
  height: 12px;
  fill: #c4c4c4;
  stroke: #a2a2a2;
}
.pager button {
  margin-right: 9px;
}
.pager .refresh {
  margin-right: 6px;
}
.pager .refresh svg {
  width: 16px;
  height: 16px;
  stroke: none;
}
.sep {
  width: 1px;
  height: 14px;
  margin-right: 6px;
  background: #aca899;
}
.sep.wide {
  margin-right: 8px;
}
.pager input {
  width: 38px;
  height: 20px;
  margin: 0 2px;
  padding: 0 4px;
  border: 1px solid #b5b8c8;
  font: inherit;
  text-align: right;
}
.pager input + span {
  margin-right: 7px;
}
.total {
  margin-left: auto;
}
.footer {
  position: relative;
  display: flex;
  flex: none;
  justify-content: flex-end;
  height: 24px;
  padding-right: 13px;
  line-height: 23px;
  background: linear-gradient(#e4e4e4, #f0f0f0);
}
.link-status {
  position: absolute;
  left: 0;
  bottom: 0;
  width: 33.3%;
  height: 22px;
  padding-left: 3px;
  line-height: 22px;
  color: #666;
  background: #f2f2f2;
  border: solid #c8c8c8;
  border-width: 1px 1px 0 0;
  border-top-right-radius: 4px;
  font-family: "Open Sans", "Noto Sans", sans-serif;
  font-size: 12px;
}

/* Панель задач */
.taskbar {
  display: flex;
  flex: none;
  align-items: center;
  gap: 3px;
  height: 40px;
  padding-left: 8px;
  color: #fff;
  border-top: 1px solid #5b6876;
  background:
    radial-gradient(ellipse 60px 20px at 22% 40%, #34403f, transparent),
    radial-gradient(ellipse 90px 16px at 29% 70%, #303c40, transparent),
    radial-gradient(ellipse 70px 24px at 38% 30%, #35424a, transparent),
    radial-gradient(ellipse 120px 18px at 51% 60%, #26333d, transparent),
    radial-gradient(ellipse 90px 22px at 64% 30%, #2b3a45, transparent),
    radial-gradient(ellipse 100px 20px at 77% 60%, #1d2b38, transparent),
    #0c141d;
  font-family: "Open Sans", "Noto Sans", sans-serif;
  font-size: 11px;
}
.start svg {
  width: 38px;
  height: 38px;
}
.start {
  margin-right: 10px;
}
.task {
  width: 59px;
  height: 38px;
}
.task svg {
  width: 32px;
  height: 32px;
}
.running {
  border: 1px solid #97a0a6;
  border-radius: 3px;
  background: linear-gradient(135deg, #6b7275, #2b3236 50%, #3d464b);
}
.running.current {
  border-color: #e4e8ea;
  background: linear-gradient(135deg, #c6c9ca, #8a9092 50%, #a3a8aa);
}
.tray {
  display: flex;
  align-items: center;
  gap: 8px;
  height: 100%;
  margin-left: auto;
}
.tray svg {
  width: 16px;
  height: 16px;
}
.lang {
  margin-right: 7px;
}
.tray .up {
  width: 8px;
  height: 4px;
  margin-right: 5px;
}
.clock {
  display: flex;
  flex-direction: column;
  align-items: center;
  margin: 0 4px 0 8px;
  line-height: 17px;
}
.show-desktop {
  width: 14px;
  height: 38px;
  border: 1px solid #6f7a84;
  background: linear-gradient(#59636c, #10171f 60%);
}
```
